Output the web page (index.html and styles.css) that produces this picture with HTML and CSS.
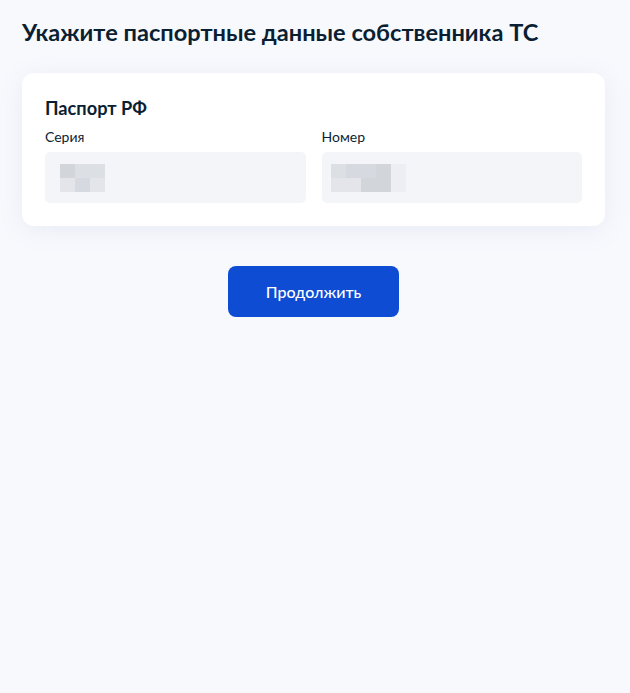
FILE: index.html
```html
<!DOCTYPE html>
<html lang="ru">
<head>
<meta charset="utf-8">
<link rel="stylesheet" href="styles.css">
</head>
<body>
<main class="page">
  <h1 class="title">Укажите паспортные данные собственника ТС</h1>
  <section class="card">
    <h2 class="card-title">Паспорт РФ</h2>
    <div class="fields">
      <div class="field">
        <label class="label">Серия</label>
        <div class="input">
          <div class="blur blur-3">
            <span class="px c1"></span><span class="px c3"></span><span class="px c3"></span>
            <span class="px c4"></span><span class="px c2"></span><span class="px c4"></span>
          </div>
        </div>
      </div>
      <div class="field">
        <label class="label">Номер</label>
        <div class="input">
          <div class="blur blur-5">
            <span class="px c3"></span><span class="px c2"></span><span class="px c2"></span><span class="px c1"></span><span class="px c5"></span>
            <span class="px c4"></span><span class="px c4"></span><span class="px c1"></span><span class="px c1"></span><span class="px c5"></span>
          </div>
        </div>
      </div>
    </div>
  </section>
  <div class="actions">
    <button class="btn" type="button">Продолжить</button>
  </div>
</main>
</body>
</html>
```
FILE: styles.css
```css
* { box-sizing: border-box; }
html, body { margin: 0; padding: 0; }
body {
  background: #f8f9fd;
  font-family: Lato, "Noto Sans", sans-serif;
  color: #0b1f33;
  min-height: 693px;
}
.page {
  padding: 16px 25px 0 22px;
}
.title {
  margin: 0 0 25px;
  font-size: 23.6px;
  line-height: 32px;
  font-weight: 700;
  color: #0b1f33;
}
.card {
  background: #fff;
  border-radius: 12px;
  padding: 23px 23px 23px 23px;
  box-shadow: 0 4px 24px rgba(120, 140, 190, 0.12);
}
.card-title {
  margin: 0 0 7px;
  font-size: 18.2px;
  line-height: 24px;
  font-weight: 700;
}
.fields {
  display: grid;
  grid-template-columns: 1fr 1fr;
  gap: 16px;
}
.label {
  display: block;
  font-size: 14px;
  line-height: 20px;
  margin-bottom: 5px;
}
.input {
  height: 51px;
  background: #f4f5f9;
  border-radius: 5px;
  padding: 10px 15px;
  display: flex;
  align-items: center;
}
.blur {
  display: grid;
  grid-auto-rows: 14px;
}
.blur-3 { grid-template-columns: repeat(3, 15px); }
.blur-5 { grid-template-columns: repeat(5, 15px); margin-left: -6px; }
.px { display: block; }
.c1 { background: #d2d5da; }
.c2 { background: #d6d9df; }
.c3 { background: #dcdfe4; }
.c4 { background: #e3e5ea; }
.c5 { background: #eceef3; }
.actions {
  display: flex;
  justify-content: center;
  padding-top: 40px;
}
.btn {
  width: 171px;
  height: 51px;
  border: none;
  border-radius: 8px;
  background: #0d4cd3;
  color: #fff;
  font-family: Lato, "Noto Sans", sans-serif;
  font-size: 16px;
  font-weight: 500;
}
```
